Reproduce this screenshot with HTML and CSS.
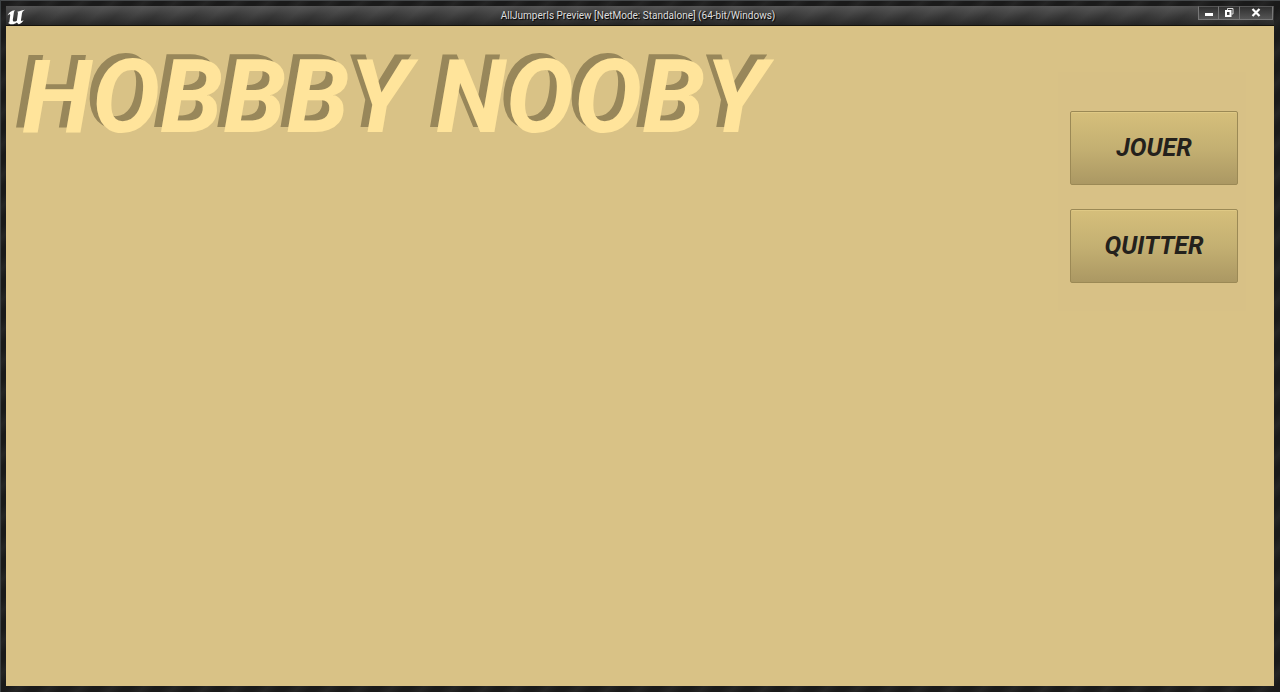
FILE: index.html
```html
<!DOCTYPE html>
<html lang="fr">
<head>
    <meta charset="UTF-8">
    <meta name="viewport" content="width=device-width, initial-scale=1.0">
    <title>AllJumperIs Preview</title>
    <link rel="stylesheet" href="styles.css">
</head>
<body>

    <div class="window">
        <header class="titlebar">
            <svg class="logo" viewBox="0 0 18 16" aria-hidden="true">
                <path d="M0.3 6.8C1.5 3.8 4.2 1.6 8 1.2L7 2.8L5.8 10.7C5.7 12 6.4 12.6 7.4 12.6C8.6 12.6 9.4 12 9.9 11.4L10.9 4.5C11 3.5 10.6 3 9.9 3.1C11.6 2.4 14 1.5 18 0.8C16.2 1.8 15.3 2.8 15 4.3L14 11C13.9 12.1 14.9 12.3 16.6 10.9C15.7 13.2 13.7 14.6 11.6 15.2L9.8 13.5C8.5 14.8 6.5 15.4 4.6 15.3C3 15.2 1.5 14.6 0.9 13.7C1.8 13.8 2.3 13.3 2.4 12.2L3.2 6.4C3.4 4.7 1.9 5 0.3 6.8Z"/>
            </svg>
            <span class="title">AllJumperIs Preview [NetMode: Standalone] (64-bit/Windows)</span>
            <div class="window-controls">
                <button type="button" aria-label="Minimize">
                    <svg width="10" height="10" viewBox="0 0 10 10"><path d="M1 5H9V8H1Z" fill="#fff"/></svg>
                </button>
                <button type="button" aria-label="Restore">
                    <svg width="10" height="10" viewBox="0 0 10 10"><path d="M3.5 2V0.5H9V6H7.5" fill="none" stroke="#ddd"/><path d="M2 3H6.5V8H2Z" fill="none" stroke="#fff" stroke-width="2"/></svg>
                </button>
                <button type="button" class="close" aria-label="Close">
                    <svg width="10" height="10" viewBox="0 0 10 10"><path d="M1.5 1L8.5 8M8.5 1L1.5 8" stroke="#fff" stroke-width="2.2"/></svg>
                </button>
            </div>
        </header>

        <main class="viewport">
            <h1>HOBBBY NOOBY</h1>
            <nav class="menu">
                <button type="button">JOUER</button>
                <button type="button">QUITTER</button>
            </nav>
        </main>
    </div>

</body>
</html>
```
FILE: styles.css
```css
:root {
    --sand: #d9c286;
    --title-color: #ffe49b;
    --title-shadow: #98875a;
    --text-dark: #24211c;
}

* {
    box-sizing: border-box;
}

body {
    margin: 0;
    font-family: Roboto, sans-serif;
}

.window {
    display: flex;
    flex-direction: column;
    min-height: 100vh;
    padding: 5px 6px 6px 5px;
    border-top: 1px solid #45484a;
    border-left: 1px solid #3d4244;
    background: repeating-linear-gradient(135deg, #1a1a1a 0, #1a1a1a 6px, #242424 14px, #1a1a1a 22px);
}

/* Title bar */
.titlebar {
    display: grid;
    grid-template-columns: 78px 1fr 82px;
    align-items: center;
    height: 20px;
    background:
        linear-gradient(rgba(90, 90, 90, 0.8), rgba(60, 60, 60, 0.6) 50%, rgba(34, 34, 34, 0.8)),
        repeating-linear-gradient(135deg, #303030 0, #4a4a4a 14px, #303030 28px);
    border-bottom: 1px solid #15120b;
}

.logo {
    width: 18px;
    height: 16px;
    margin-left: 1px;
    margin-top: 2px;
    fill: #ffffff;
}

.title {
    color: #dedede;
    font-size: 10px;
    font-kerning: none;
    line-height: 18px;
    text-align: center;
    text-shadow: 1px 1px 1px #000000;
    white-space: nowrap;
}

.window-controls {
    display: flex;
    align-self: start;
    justify-content: flex-end;
    margin-right: 1px;
}

.window-controls button {
    display: flex;
    align-items: center;
    justify-content: center;
    width: 21px;
    height: 14px;
    padding: 0;
    border: 1px solid #777777;
    border-left-width: 0;
    border-top-color: #555555;
    background: linear-gradient(#303030, #555555);
}

.window-controls button:first-child {
    border-left-width: 1px;
}

.window-controls .close {
    width: 33px;
}

/* Game screen */
.viewport {
    flex: 1;
    display: flex;
    justify-content: space-between;
    align-items: flex-start;
    background: var(--sand);
}

h1 {
    margin: 21px 0 0 16px;
    color: var(--title-color);
    font-size: 102px;
    font-style: italic;
    font-weight: 700;
    font-kerning: none;
    line-height: 100px;
    text-shadow: -7px -5px 0 var(--title-shadow);
    white-space: nowrap;
}

.menu {
    display: flex;
    flex-direction: column;
    gap: 24px;
    margin: 46px 28px 0 0;
    padding: 39px 8px 28px 12px;
    background: #d8c186;
}

.menu button {
    width: 168px;
    height: 74px;
    padding: 0 0 2px;
    border: 1px solid #9b8955;
    border-radius: 2px;
    background: linear-gradient(#d6bf7b, #c4b072 50%, #ab9863);
    box-shadow: inset 0 1px 0 #dfc985;
    color: var(--text-dark);
    font-family: inherit;
    font-size: 25px;
    font-style: italic;
    font-weight: 700;
    cursor: pointer;
}

.menu button:hover {
    background: linear-gradient(#e0ca88, #b7a46c);
}
```
